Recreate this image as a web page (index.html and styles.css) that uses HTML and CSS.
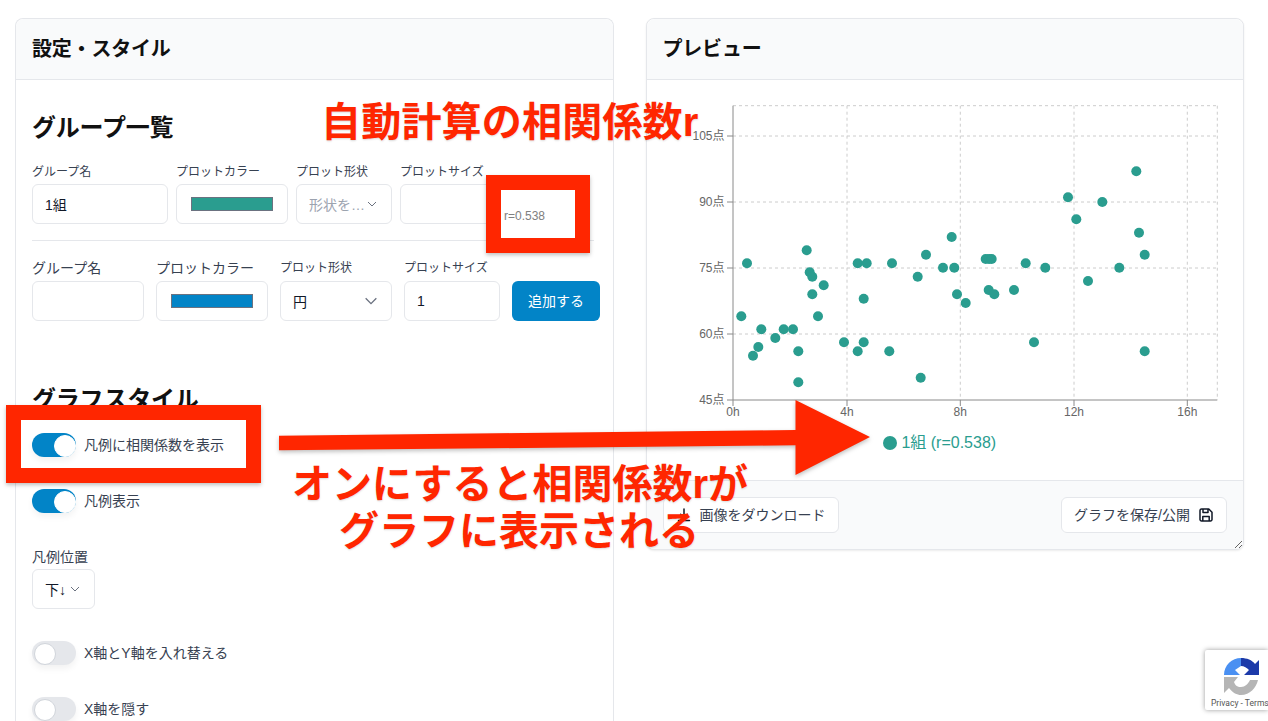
FILE: index.html
```html
<!DOCTYPE html>
<html lang="ja">
<head>
<meta charset="utf-8">
<title>相関係数</title>
<link rel="stylesheet" href="styles.css">
</head>
<body>
<main class="layout">
  <section class="card settings">
    <header class="card-head"><h1>設定・スタイル</h1></header>
    <div class="settings-body">
      <h2>グループ一覧</h2>
      <div class="row row-a">
        <div class="field w136"><label>グループ名</label><input class="box" value="1組"></div>
        <div class="field w112"><label>プロットカラー</label><div class="box swatch-box"><span class="swatch teal"></span></div></div>
        <div class="field w96"><label>プロット形状</label><div class="box select muted"><span>形状を…</span><svg class="chev" viewBox="0 0 12 12"><path d="M2 4l4 4 4-4"/></svg></div></div>
        <div class="field w96"><label>プロットサイズ</label><input class="box"></div>
      </div>
      <hr class="divider">
      <div class="row row-b">
        <div class="field w112"><label>グループ名</label><input class="box"></div>
        <div class="field w112"><label>プロットカラー</label><div class="box swatch-box"><span class="swatch blue"></span></div></div>
        <div class="field w112"><label class="small-label">プロット形状</label><div class="box select"><span>円</span><svg class="chev big" viewBox="0 0 12 12"><path d="M2 4l4 4 4-4"/></svg></div></div>
        <div class="field w96"><label class="small-label">プロットサイズ</label><input class="box" value="1"></div>
        <button class="primary">追加する</button>
      </div>
      <h2 class="style-title">グラフスタイル</h2>
      <div class="toggle-row"><span class="toggle on"></span><span class="toggle-label">凡例に相関係数を表示</span></div>
      <div class="toggle-row gap"><span class="toggle on"></span><span class="toggle-label">凡例表示</span></div>
      <div class="legend-pos">
        <label>凡例位置</label>
        <div class="box select pos"><span>下↓</span><svg class="chev" viewBox="0 0 12 12"><path d="M2 4l4 4 4-4"/></svg></div>
      </div>
      <div class="toggle-row gap"><span class="toggle"></span><span class="toggle-label">X軸とY軸を入れ替える</span></div>
      <div class="toggle-row gap"><span class="toggle"></span><span class="toggle-label">X軸を隠す</span></div>
    </div>
  </section>

  <section class="card preview">
    <header class="card-head"><h1>プレビュー</h1></header>
    <div class="chart-wrap">
      <svg class="chart" viewBox="663 90 564 340" width="564" height="340">
        <g class="grid">
          <path d="M733 105.700H1217.300M733 136H1217.300M733 202H1217.300M733 268H1217.300M733 334H1217.300"/>
          <path d="M847 105.700V400M960.300 105.700V400M1074 105.700V400M1187.300 105.700V400M1217.300 105.700V400"/>
        </g>
        <g class="axis">
          <path d="M733 105.700V400H1217.300"/>
          <path d="M727 136H733M727 202H733M727 268H733M727 334H733M727 400H733"/>
          <path d="M733 400V406M847 400V406M960.300 400V406M1074 400V406M1187.300 400V406"/>
        </g>
        <g class="ylabels">
          <text x="724.500" y="140">105点</text>
          <text x="724.500" y="206">90点</text>
          <text x="724.500" y="272">75点</text>
          <text x="724.500" y="338">60点</text>
          <text x="724.500" y="404">45点</text>
        </g>
        <g class="xlabels">
          <text x="733" y="416">0h</text>
          <text x="847" y="416">4h</text>
          <text x="960.300" y="416">8h</text>
          <text x="1074" y="416">12h</text>
          <text x="1187.300" y="416">16h</text>
        </g>
        <g class="pts">
          <circle cx="741.300" cy="316.300" r="5"/><circle cx="747" cy="263.300" r="5"/><circle cx="753" cy="355.700" r="5"/>
          <circle cx="758.300" cy="347" r="5"/><circle cx="761.300" cy="329.300" r="5"/><circle cx="775.300" cy="338" r="5"/>
          <circle cx="783.700" cy="329.300" r="5"/><circle cx="793" cy="329.300" r="5"/><circle cx="798.300" cy="351.300" r="5"/>
          <circle cx="798.300" cy="382.300" r="5"/><circle cx="806.700" cy="250.300" r="5"/><circle cx="809.700" cy="272.300" r="5"/>
          <circle cx="812.300" cy="276.700" r="5"/><circle cx="812.300" cy="294.300" r="5"/><circle cx="818" cy="316.300" r="5"/>
          <circle cx="823.700" cy="285.300" r="5"/><circle cx="844" cy="342.300" r="5"/><circle cx="857.700" cy="351.300" r="5"/>
          <circle cx="857.700" cy="263.300" r="5"/><circle cx="863.700" cy="298.700" r="5"/><circle cx="863.700" cy="342.300" r="5"/>
          <circle cx="866.700" cy="263.300" r="5"/><circle cx="889.300" cy="351.300" r="5"/><circle cx="892" cy="263.300" r="5"/>
          <circle cx="917.700" cy="276.700" r="5"/><circle cx="920.700" cy="377.700" r="5"/><circle cx="926" cy="254.700" r="5"/>
          <circle cx="943" cy="267.700" r="5"/><circle cx="951.700" cy="237" r="5"/><circle cx="954.300" cy="267.700" r="5"/>
          <circle cx="957" cy="294.300" r="5"/><circle cx="965.700" cy="303" r="5"/><circle cx="985.700" cy="259" r="5"/>
          <circle cx="989" cy="259" r="5"/><circle cx="991.700" cy="259" r="5"/><circle cx="988.700" cy="290" r="5"/>
          <circle cx="994.300" cy="294.300" r="5"/><circle cx="1014" cy="290" r="5"/><circle cx="1025.700" cy="263.300" r="5"/>
          <circle cx="1034" cy="342.300" r="5"/><circle cx="1045.300" cy="267.700" r="5"/><circle cx="1068" cy="197.300" r="5"/>
          <circle cx="1076.300" cy="219.300" r="5"/><circle cx="1088" cy="281" r="5"/><circle cx="1102.300" cy="202" r="5"/>
          <circle cx="1119.300" cy="267.700" r="5"/><circle cx="1136.300" cy="171.300" r="5"/><circle cx="1139" cy="232.700" r="5"/>
          <circle cx="1144.700" cy="254.700" r="5"/><circle cx="1144.700" cy="351.300" r="5"/>
        </g>
      </svg>
      <div class="legend"><span class="dot"></span><span class="legend-text">1組 (r=0.538)</span></div>
    </div>
    <footer class="card-foot">
      <button class="ghost">
        <svg class="ico" viewBox="0 0 16 16"><path d="M8 2v8.500M4.600 7.400L8 10.800l3.400-3.400M2.500 13.500h11"/></svg>
        <span class="ghost-label">画像をダウンロード</span>
      </button>
      <button class="ghost">
        <span class="ghost-label">グラフを保存/公開</span>
        <svg class="ico" viewBox="0 0 16 16"><path d="M3.500 2h7.300L14 5.200v7.300A1.500 1.500 0 0 1 12.500 14h-9A1.500 1.500 0 0 1 2 12.500v-9A1.500 1.500 0 0 1 3.500 2zM5 2.200V5.500h5V2.200M4.800 14V9.500h6.400V14"/></svg>
      </button>
    </footer>
  </section>
</main>

<div class="note note-top">自動計算の相関係数r</div>
<div class="note note-bottom">オンにすると相関係数rが<br>グラフに表示される</div>
<div class="frame frame-r"><span>r=0.538</span></div>
<div class="frame frame-toggle"></div>
<svg class="arrow" viewBox="279 400 591 75" width="591" height="75"><polygon points="279,435.700 795.500,430 795.500,400 870,437 795.500,475 795.500,445.300 279,450.300"/></svg>

<aside class="recaptcha">
  <svg class="rc-logo" viewBox="0 0 37 39" width="37" height="39">
    <path class="rc-blue" d="M1 18C1 8 9 1 18 1V9L12 13L17 18Z"/>
    <path class="rc-dark" d="M18 1C24 1 29 3 32 7L36 3V18H21L26 13C24 11 21 9 18 9Z"/>
    <path class="rc-gray" d="M1 20V36L6 31C10 36 14 38 18 38C27 38 33 31 35 23H27C25 27 22 30 18 30C14 30 12 28 11 25L15 20Z"/>
  </svg>
  <div class="rc-text">Privacy - Terms</div>
</aside>
</body>
</html>
```
FILE: styles.css
```css
* { box-sizing: border-box; }
html, body { margin: 0; height: 721px; overflow: hidden; background: #fff; }
body {
  position: relative;
  font-family: "Liberation Sans", "Noto Sans CJK JP", sans-serif;
  color: #111827;
  font-size: 14px;
}
.layout {
  display: grid;
  grid-template-columns: 598.500px 598.500px;
  column-gap: 32px;
  align-items: start;
  padding: 18px 0 0 15px;
}
.card {
  border: 1px solid #e5e7eb;
  border-radius: 8px;
  background: #fff;
}
.settings { border-bottom: 0; height: 703px; border-radius: 8px 8px 0 0; }
.preview {
  box-shadow: 0 1px 2px rgba(0, 0, 0, .08);
  resize: both;
  overflow: hidden;
}
.card-head {
  height: 61px;
  padding: 0 16px;
  display: flex;
  align-items: center;
  background: #f9fafb;
  border-bottom: 1px solid #e5e7eb;
  border-radius: 8px 8px 0 0;
}
h1 { margin: 0; font-size: 20px; line-height: 28px; font-weight: 700; color: #111; letter-spacing: -.2px; }
h2 { margin: 0; font-size: 24px; line-height: 32px; font-weight: 700; color: #111; letter-spacing: -.2px; }
.settings-body { padding: 32px 16px 0; }
.row { display: flex; align-items: flex-end; }
.row > * { flex: none; }
.row-a { gap: 8px; margin-top: 20px; }
.row-b { gap: 12px; }
.field { display: flex; flex-direction: column; }
.w136 { width: 136px; }
.w112 { width: 112px; }
.w96 { width: 96px; }
label { color: #374151; white-space: nowrap; }
.row-a label { font-size: 12px; line-height: 16px; margin-bottom: 4px; }
.row-b label { font-size: 14px; line-height: 20px; margin-bottom: 3px; }
.row-b .small-label { font-size: 12px; }
.box {
  height: 40px;
  width: 100%;
  border: 1px solid #e5e7eb;
  border-radius: 6px;
  background: #fff;
  padding: 0 12px 1px;
  font: inherit;
  color: #111827;
  outline: 0;
}
.swatch-box { display: flex; align-items: center; justify-content: center; padding: 0; }
.swatch { display: block; width: 82px; height: 14px; border: 1px solid #6b7280; }
.teal { background: #2a9d8f; }
.blue { background: #0284c7; }
.select { display: flex; align-items: center; justify-content: space-between; }
.muted { color: #9ca3af; padding-right: 13px; }
.chev { width: 12px; height: 12px; fill: none; stroke: #6b7280; stroke-width: 1; }
.chev.big { width: 16px; height: 16px; }
.divider {
  margin: 16px 3px 17px 0;
  height: 1px;
  border: 0;
  background: #e5e7eb;
}
.primary {
  width: 88px;
  height: 40px;
  padding: 0 0 2px;
  border: 0;
  border-radius: 6px;
  background: #0284c7;
  color: #fff;
  font: inherit;
}
.style-title { margin-top: 63px; margin-bottom: 17px; }
.toggle-row { display: flex; align-items: center; gap: 8px; height: 24px; color: #374151; white-space: nowrap; }
.toggle-label { margin-bottom: 3px; }
.gap { margin-top: 32px; }
.toggle {
  position: relative;
  display: block;
  width: 44px;
  height: 24px;
  border-radius: 12px;
  background: #e5e7eb;
  box-shadow: 0 4px 6px rgba(0, 0, 0, .05);
}
.toggle::after {
  content: "";
  position: absolute;
  left: 2px;
  top: 2px;
  width: 20px;
  height: 20px;
  border-radius: 50%;
  background: #fff;
  border: 1px solid #d1d5db;
}
.toggle.on { background: #0284c7; }
.toggle.on::after { left: 22px; border-color: #fff; }
.legend-pos { margin-top: 34px; display: flex; flex-direction: column; align-items: flex-start; }
.legend-pos label { line-height: 20px; margin-bottom: 2px; }
.pos { width: 63px; padding-right: 13px; }
.chart-wrap { padding: 10px 16px 25px; }
.chart { display: block; }
.grid path { fill: none; stroke: #ccc; stroke-width: 1; stroke-dasharray: 3 3; }
.axis path { fill: none; stroke: #8a8a8a; stroke-width: 1; }
.ylabels text, .xlabels text { font-size: 12px; fill: #666; font-family: "Liberation Sans", "Noto Sans CJK JP", sans-serif; }
.ylabels text { text-anchor: end; }
.xlabels text { text-anchor: middle; }
.pts circle { fill: #2a9d8f; }
.legend {
  height: 24px;
  margin-top: 1px;
  padding-right: 10px;
  display: flex;
  align-items: center;
  justify-content: center;
  gap: 4px;
  color: #2a9d8f;
  font-size: 16px;
}
.legend-text { margin-bottom: 5px; }
.dot { width: 14px; height: 14px; border-radius: 50%; background: #2a9d8f; }
.card-foot {
  display: flex;
  justify-content: space-between;
  padding: 16px;
  background: #f9fafb;
  border-top: 1px solid #e5e7eb;
}
.ghost {
  height: 36px;
  padding: 0 12px;
  display: flex;
  align-items: center;
  gap: 8px;
  border: 1px solid #e5e7eb;
  border-radius: 6px;
  background: #fff;
  color: #374151;
  font: inherit;
}
.ghost-label { margin-bottom: 3px; }
.ico { width: 16px; height: 16px; fill: none; stroke: #111827; stroke-width: 1.500; stroke-linecap: round; stroke-linejoin: round; }
.note {
  position: absolute;
  color: #ff2600;
  font-weight: 700;
  text-align: center;
  white-space: nowrap;
  text-shadow: 0 1px 2px rgba(0, 0, 0, .15);
}
.note-top { left: 321px; top: 96px; font-size: 40px; line-height: 52px; letter-spacing: .2px; }
.note-bottom { left: 292px; top: 461px; width: 454px; font-size: 40px; line-height: 47px; }
.frame {
  position: absolute;
  border: 15px solid #ff2600;
  box-shadow: 0 2px 4px rgba(0, 0, 0, .25);
}
.frame-r {
  left: 486px;
  top: 175px;
  width: 104px;
  height: 78px;
  background: #fff;
  color: #808080;
  font-size: 12px;
}
.frame-r span { position: absolute; left: 3px; top: 18px; line-height: 16px; }
.frame-toggle { left: 6px; top: 405px; width: 255px; height: 78px; }
.arrow { position: absolute; left: 279px; top: 400px; filter: drop-shadow(0 2px 2px rgba(0, 0, 0, .25)); overflow: visible; }
.arrow polygon { fill: #ff2600; }
.recaptcha {
  position: absolute;
  right: 0;
  top: 649.500px;
  width: 63px;
  height: 60.500px;
  background: #fff;
  border-radius: 2px 0 0 2px;
  box-shadow: 0 0 5px rgba(0, 0, 0, .4);
  overflow: hidden;
}
.rc-logo { position: absolute; left: 18px; top: 7px; }
.rc-blue { fill: #4a90f2; }
.rc-dark { fill: #1c3aa9; }
.rc-gray { fill: #b5b5b5; }
.rc-text {
  position: absolute;
  left: 6px;
  top: 46px;
  white-space: nowrap;
  font: 8.500px/14px Roboto, "Liberation Sans", sans-serif;
  color: #555;
}
```
